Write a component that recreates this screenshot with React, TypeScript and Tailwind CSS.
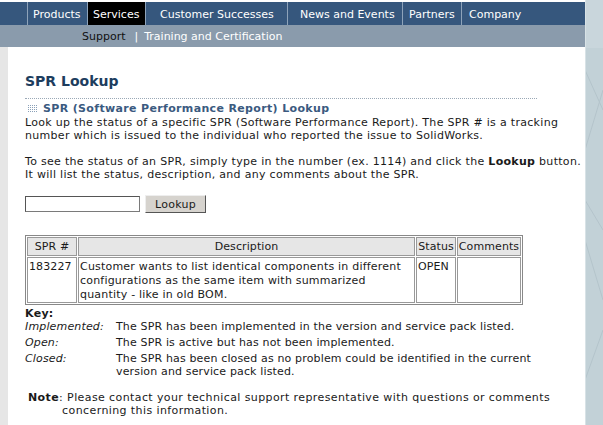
import { useState } from "react";

const navItems = [
  { label: "Products", width: "w-[60px]", pad: "pl-[5px]" },
  { label: "Services", width: "w-[58px]", pad: "pl-[5px]", active: true },
  { label: "Customer Successes", width: "w-[142px]", pad: "pl-[14px]" },
  { label: "News and Events", width: "w-[115px]", pad: "pl-[12px]" },
  { label: "Partners", width: "w-[59px]", pad: "pl-[6px]" },
  { label: "Company", width: "flex-1", pad: "pl-[7px]" },
];

const keyRows = [
  { term: "Implemented:", text: "The SPR has been implemented in the version and service pack listed." },
  { term: "Open:", text: "The SPR is active but has not been implemented." },
  {
    term: "Closed:",
    text: "The SPR has been closed as no problem could be identified in the current version and service pack listed.",
  },
];

function GridIcon() {
  return (
    <svg width="10" height="8" viewBox="0 0 10 8" className="ml-[3px] mr-[5px] shrink-0" aria-hidden="true">
      {[0, 2, 4, 6].map((y) =>
        [0, 2, 4, 6, 8].map((x) => (
          <rect key={`${x}-${y}`} x={x} y={y} width="1" height="1" fill="#8aa0b8" />
        ))
      )}
    </svg>
  );
}

export default function App() {
  const [spr, setSpr] = useState("");

  return (
    <div className="w-[603px] h-[425px] overflow-hidden flex bg-white text-[11px] leading-[13px] tracking-[0.3px] text-[#1a1a1a] [font-family:'DejaVu_Sans',Verdana,sans-serif]">
      <div className="w-[585px] flex flex-col">
        <div className="h-[2px] bg-white" />
        <nav className="h-[23px] flex bg-[#36577d] text-white tracking-normal whitespace-nowrap">
          <div className="w-[27px]" />
          {navItems.map((item) => (
            <div
              key={item.label}
              className={`${item.width} ${item.pad} border-l border-[#8ea3ba] pt-[6px] ${item.active ? "bg-black" : ""}`}
            >
              {item.label}
            </div>
          ))}
        </nav>
        <div className="h-[22px] bg-[#8a9bac] flex items-center pl-[82px] tracking-normal">
          <span className="text-[#111]">Support</span>
          <span className="text-white ml-[9px] mr-[6px]">|</span>
          <span className="text-white">Training and Certification</span>
        </div>

        <div className="flex flex-1">
          <div className="w-[8px] bg-[#e6e6e6]" />
          <main className="flex-1 pl-[17px] pt-[25px]">
            <h1 className="text-[14px] leading-[18px] font-bold text-[#1d3d5e] tracking-normal">SPR Lookup</h1>
            <div className="w-[512px] mt-[8px] border-t border-dotted border-[#9aa8b6]" />
            <h2 className="flex items-center mt-[3px] font-bold text-[#3a5a80] tracking-[0.35px]">
              <GridIcon />
              SPR (Software Performance Report) Lookup
            </h2>
            <p className="mt-[1px] w-[556px]">
              Look up the status of a specific SPR (Software Performance Report). The SPR # is a tracking number which
              is issued to the individual who reported the issue to SolidWorks.
            </p>
            <p className="mt-[13px] w-[558px]">
              To see the status of an SPR, simply type in the number (ex. 1114) and click the <b>Lookup</b> button.
              It will list the status, description, and any comments about the SPR.
            </p>

            <form className="flex items-center mt-[14px]" onSubmit={(e) => e.preventDefault()}>
              <input
                value={spr}
                onChange={(e) => setSpr(e.target.value)}
                className="w-[115px] h-[16px] border border-[#7a7a7a] border-t-[#555] border-l-[#555] bg-white outline-none"
              />
              <button
                type="submit"
                className="ml-[5px] w-[61px] h-[18px] bg-[#d6d3ce] border border-[#eee] border-r-[#555] border-b-[#555]"
              >
                Lookup
              </button>
            </form>

            <table className="mt-[22px] w-[498px] border border-[#888] border-separate border-spacing-[1px] tracking-[0.1px]">
              <thead>
                <tr className="bg-[#e6e6e6]">
                  <th className="w-[50px] border border-[#999] font-normal h-[19px] text-center">SPR #</th>
                  <th className="border border-[#999] font-normal text-center">Description</th>
                  <th className="w-[40px] border border-[#999] font-normal text-center">Status</th>
                  <th className="w-[64px] border border-[#999] font-normal text-center">Comments</th>
                </tr>
              </thead>
              <tbody>
                <tr className="align-top leading-[14px]">
                  <td className="border border-[#999] px-[1px] pt-[2px] h-[43px]">183227</td>
                  <td className="border border-[#999] px-[1px] pt-[2px] tracking-[0.2px]">
                    Customer wants to list identical components in different configurations as the same item with
                    summarized quantity - like in old BOM.
                  </td>
                  <td className="border border-[#999] px-[1px] pt-[2px]">OPEN</td>
                  <td className="border border-[#999]" />
                </tr>
              </tbody>
            </table>

            <div className="font-bold mt-[2px]">Key:</div>
            <div className="flex flex-col gap-[3px] tracking-[0.15px]">
              {keyRows.map((row) => (
                <div key={row.term} className="flex">
                  <span className="w-[91px] shrink-0 italic">{row.term}</span>
                  <span className="w-[430px]">{row.text}</span>
                </div>
              ))}
            </div>

            <div className="mt-[13px] ml-[3px] flex tracking-[0.4px]">
              <span className="font-bold shrink-0">Note</span>
              <span className="w-[500px]">
                : Please contact your technical support representative with questions or comments
                <br />
                <span className="pl-[3px]">concerning this information.</span>
              </span>
            </div>
          </main>
        </div>
      </div>

      <div className="w-[18px] bg-[#c2d1d7] relative overflow-hidden">
        <svg width="18" height="425" className="absolute inset-0" aria-hidden="true">
          <rect x="0" y="0" width="18" height="48" fill="#c9d6dc" />
          <path d="M0 70 L18 110 M18 90 L0 150 M0 200 L18 230 M0 240 L18 300 M18 330 L0 380" stroke="#b4c4cb" strokeWidth="1" fill="none" />
          <line x1="0.5" y1="0" x2="0.5" y2="425" stroke="#d8e2e6" />
        </svg>
      </div>
    </div>
  );
}
